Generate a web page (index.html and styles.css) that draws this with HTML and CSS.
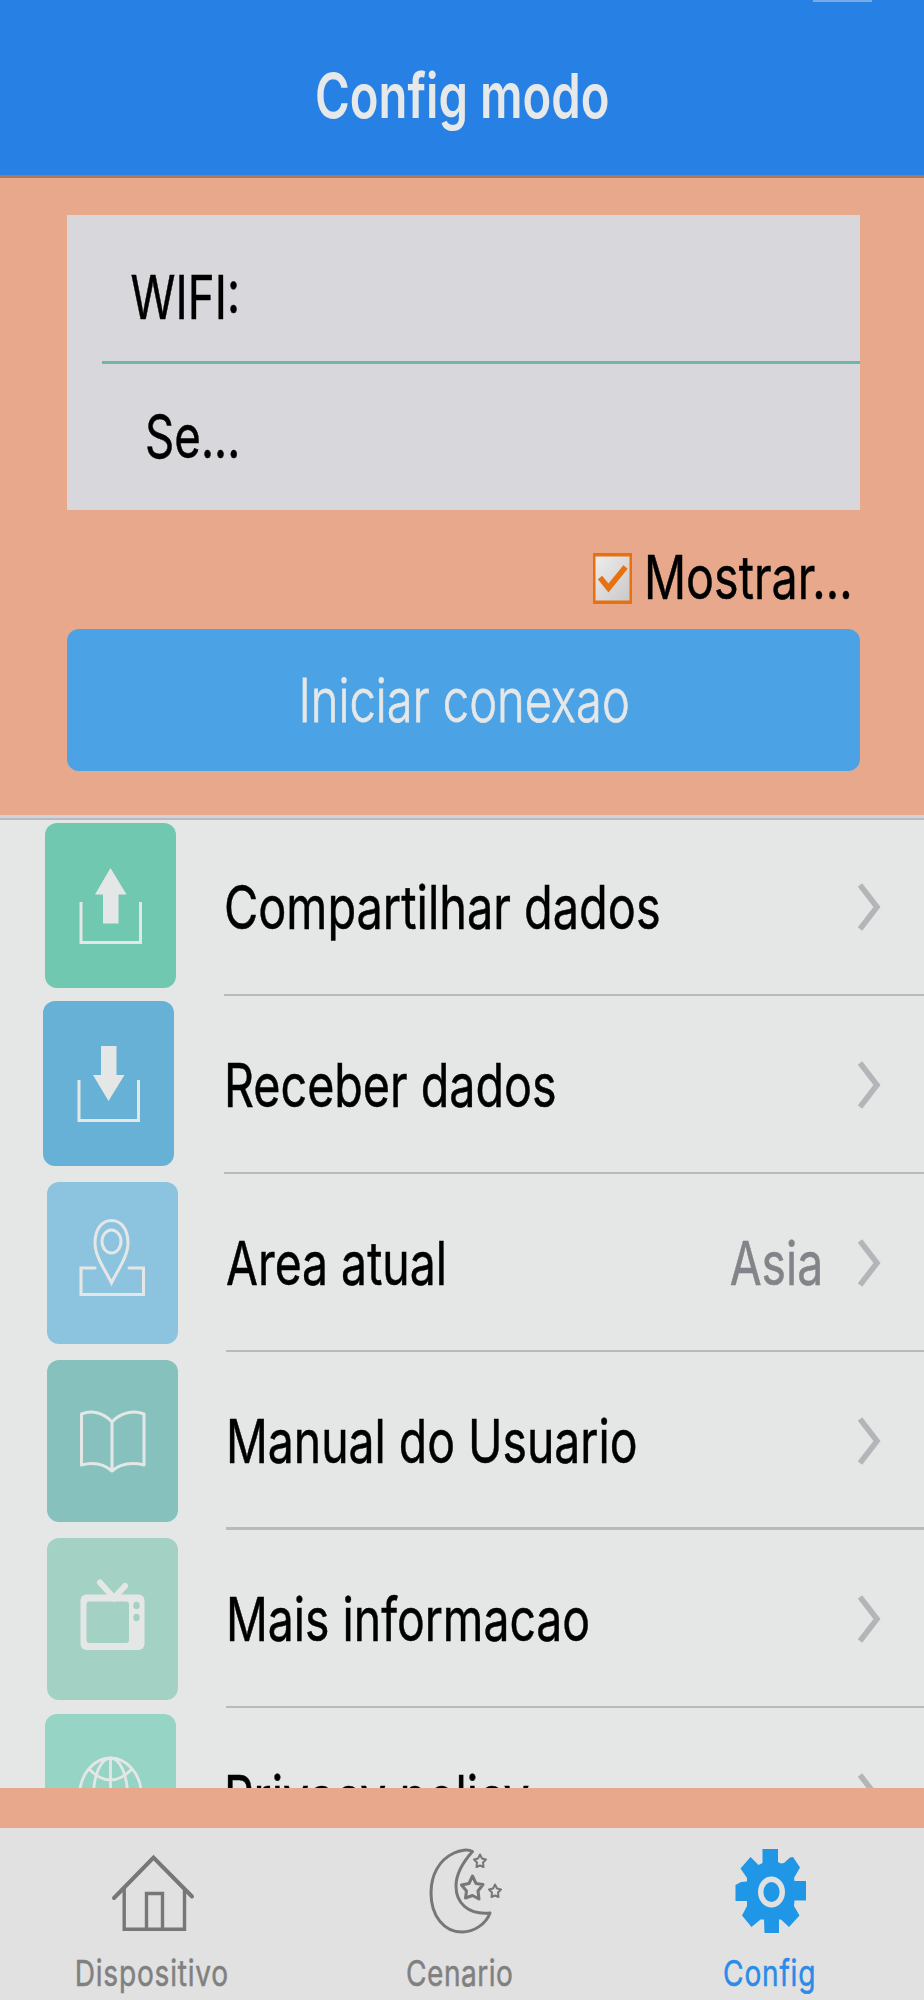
FILE: index.html
```
<!DOCTYPE html>
<html lang="pt">
    <head>
        <meta charset="UTF-8">
        <meta name="viewport" content="width=device-width, initial-scale=1.0">
        <title>Config modo</title>
        <link rel="stylesheet" href="styles.css">
    </head>
    <body>
        <header class="header">
            <div class="status-pill"></div>
            <h1 class="narrow">Config modo</h1>
        </header>

        <div class="wifi">
            <div class="wifi-card">
                <div class="field"><span class="narrow">WIFI:</span></div>
                <div class="line"></div>
                <div class="field"><span class="narrow">Se...</span></div>
            </div>
            <div class="show">
                <svg class="checkbox" width="39" height="51" viewBox="0 0 39 51">
                    <defs>
                        <linearGradient id="box" x1="0" y1="0" x2="1" y2="1">
                            <stop offset="0" stop-color="#ededed"/>
                            <stop offset="1" stop-color="#c9c9c9"/>
                        </linearGradient>
                    </defs>
                    <rect width="39" height="51" fill="#e8700f"/>
                    <rect x="2.5" y="3.5" width="34" height="44" fill="url(#box)"/>
                    <path d="M7 24.5L15.5 35L32.500 14" fill="none" stroke="#e8700f" stroke-width="5.6"/>
                </svg>
                <span class="narrow show-label">Mostrar...</span>
            </div>
            <button class="connect"><span class="narrow">Iniciar conexao</span></button>
        </div>

        <main class="list">
            <div class="row">
                <div class="tile share">
                    <svg width="131" height="165" viewBox="0 0 131 165">
                        <path d="M65.5 45L81.5 71.5H73.5V100.5H58V71.5H50Z" fill="#e5e7e6"/>
                        <path d="M36 79V119.5H95.5V79" fill="none" stroke="#e5e7e6" stroke-width="3"/>
                    </svg>
                </div>
                <div class="content">
                    <span class="narrow compartilhar">Compartilhar dados</span>
                    <svg class="chevron" width="23" height="48" viewBox="0 0 23 48"><path d="M2 2L19 24L2 46"/></svg>
                </div>
            </div>
            <div class="row">
                <div class="tile receive">
                    <svg width="131" height="165" viewBox="0 0 131 165">
                        <path d="M65.5 100L81.5 74H73.5V45H58V74H50Z" fill="#e5e7e6"/>
                        <path d="M36 79V119.5H95.5V79" fill="none" stroke="#e5e7e6" stroke-width="3"/>
                    </svg>
                </div>
                <div class="content">
                    <span class="narrow receber">Receber dados</span>
                    <svg class="chevron" width="23" height="48" viewBox="0 0 23 48"><path d="M2 2L19 24L2 46"/></svg>
                </div>
            </div>
            <div class="row inset">
                <div class="tile area">
                    <svg width="131" height="162" viewBox="0 0 131 162">
                        <g fill="none" stroke="#e5e7e6" stroke-width="3" stroke-linecap="round">
                            <path d="M64.5 101C59 89 48 75 48 61C48 47 55 38.5 64.5 38.5S81 47 81 61C81 75 70 89 64.5 101Z"/>
                            <ellipse cx="64.5" cy="59.5" rx="9.5" ry="11.5"/>
                            <path d="M48 86H34V112.5H96.5V86H82"/>
                        </g>
                    </svg>
                </div>
                <div class="content">
                    <span class="narrow">Area atual</span>
                    <span class="narrow value">Asia</span>
                    <svg class="chevron" width="23" height="48" viewBox="0 0 23 48"><path d="M2 2L19 24L2 46"/></svg>
                </div>
            </div>
            <div class="row inset thick">
                <div class="tile manual">
                    <svg width="131" height="162" viewBox="0 0 131 162">
                        <path d="M65 62C56 52 44 50 34.5 54V105C46 102 57 104 65 111C73 104 84 102 97 105V54C87 50 74 52 65 62ZM65 62V111" fill="none" stroke="#e5e7e6" stroke-width="3" stroke-linejoin="round"/>
                    </svg>
                </div>
                <div class="content">
                    <span class="narrow">Manual do Usuario</span>
                    <svg class="chevron" width="23" height="48" viewBox="0 0 23 48"><path d="M2 2L19 24L2 46"/></svg>
                </div>
            </div>
            <div class="row inset">
                <div class="tile more">
                    <svg width="131" height="162" viewBox="0 0 131 162">
                        <rect x="33.5" y="56.5" width="64" height="55.5" rx="6" fill="#e5e7e6"/>
                        <rect x="39.5" y="63.5" width="42.5" height="41.5" rx="3" fill="#a3d1c3"/>
                        <ellipse cx="89.5" cy="67.5" rx="3.2" ry="3.8" fill="#a3d1c3"/>
                        <ellipse cx="89.5" cy="79.5" rx="3.2" ry="3.8" fill="#a3d1c3"/>
                        <path d="M53 44.5L67 60L78 48" fill="none" stroke="#e5e7e6" stroke-width="6" stroke-linecap="round"/>
                    </svg>
                </div>
                <div class="content">
                    <span class="narrow">Mais informacao</span>
                    <svg class="chevron" width="23" height="48" viewBox="0 0 23 48"><path d="M2 2L19 24L2 46"/></svg>
                </div>
            </div>
            <div class="row">
                <div class="tile privacy">
                    <svg width="131" height="165" viewBox="0 0 131 165">
                        <g fill="none" stroke="#e5e7e6" stroke-width="2.8">
                            <ellipse cx="65.5" cy="82" rx="31" ry="38"/>
                            <ellipse cx="65.5" cy="82" rx="17" ry="38"/>
                            <path d="M65.5 44V120M34 82H97M44 55Q65.5 77 87 55M44 109Q65.5 87 87 109"/>
                        </g>
                    </svg>
                </div>
                <div class="content">
                    <span class="narrow">Privacy policy</span>
                    <svg class="chevron" width="23" height="48" viewBox="0 0 23 48"><path d="M2 2L19 24L2 46"/></svg>
                </div>
            </div>
        </main>

        <nav class="tabs">
            <div class="tab">
                <svg width="100" height="86" viewBox="0 0 100 86">
                    <g fill="none" stroke="#777" stroke-width="3.4">
                        <path d="M12 50L51.5 9.5L90 48.5" stroke-width="4" stroke-linecap="round"/>
                        <path d="M22.2 40V81.3H82.5V40M44.5 81V45.5H60.5V81"/>
                    </g>
                </svg>
                <span class="narrow">Dispositivo</span>
            </div>
            <div class="tab">
                <svg width="100" height="86" viewBox="0 0 100 86">
                    <g fill="none" stroke="#777" stroke-width="3" stroke-linejoin="round">
                        <path d="M62.5 3.5C58 1 50 2 44 5C29 12 21 27 21 45C21 68 34 84 52 84C64 84 76 76 80 65C58 67 46 55 46 38C46 24 54 13 62.5 3.5Z"/>
                        <path d="M62.5 28L66 35.5L73 36.5L68 43L69 51L62.5 47.5L55.5 50L56.5 43L51.5 37L59 35.5Z"/>
                        <path d="M70 6.5L72 10.5L76 11.5L73 14.5L73.5 19L70 17.5L66.5 19L67 14.5L64 11.5L68 10.5Z" stroke-width="2"/>
                        <path d="M85 36.5L87 40.5L91 41.5L88 44.5L88.5 49L85 47.5L81.5 49L82 44.5L79 41.5L83 40.5Z" stroke-width="2"/>
                    </g>
                </svg>
                <span class="narrow cenario">Cenario</span>
            </div>
            <div class="tab active">
                <svg width="100" height="86" viewBox="0 0 100 86">
                    <path d="M42.5 1H58V14L61 15.5L64 15L70 9.5L73 9L80 19.5L74 30L74.5 33H86V52.5H74.5L74 58L79.5 67.5L69 79L61 71.5H59V85H44.5L44 71.5H40.5L31.5 79L22 67.5L27 58V53H15.5V37L21 34L27 33.5V30L20.5 20.5L30.5 9L38.5 17L42.5 15Z" fill="#1f97e6"/>
                    <ellipse cx="51.5" cy="44" rx="10.8" ry="12.8" fill="none" stroke="#e1e1e1" stroke-width="5.4"/>
                </svg>
                <span class="narrow">Config</span>
            </div>
        </nav>
    </body>
</html>
```
FILE: styles.css
```
*{
    box-sizing: border-box;
}

body{
    margin: 0;
    height: 2000px;
    overflow: hidden;
    display: flex;
    flex-direction: column;
    background-color: #e7a88b;
    font-family: Inter, "Liberation Sans", sans-serif;
    font-size: 60px;
    line-height: 72px;
    color: #000;
}

/* tall, condensed lettering */
.narrow{
    display: inline-block;
    white-space: nowrap;
    transform: scaleX(0.772);
    transform-origin: left center;
    -webkit-text-stroke: 0.5px currentColor;
}

.header{
    height: 178px;
    flex: none;
    background-color: #2781e5;
    border-bottom: 3px solid #a9795f;
    text-align: center;
}

.status-pill{
    width: 59px;
    height: 2px;
    margin-left: 813px;
    background-color: #78abe5;
}

.header h1{
    margin: 57px 0 0;
    font-size: 62px;
    font-weight: 600;
    line-height: 74px;
    color: #e6e8e9;
    transform: scaleX(0.762);
    transform-origin: center;
    -webkit-text-stroke: 0;
}

.wifi{
    height: 637px;
    flex: none;
    padding: 37px 64px 0 67px;
}

.wifi-card{
    height: 295px;
    padding-top: 10px;
    background-color: #d8d8dc;
}

.field{
    height: 136px;
    width: 173px;
    padding-top: 36px;
    text-align: right;
}

.field .narrow{
    transform: scaleX(0.76);
    transform-origin: right center;
}

.line{
    height: 3px;
    margin-left: 35px;
    background-color: #70b5aa;
}

.show{
    height: 119px;
    padding: 43px 0 0 526px;
    display: flex;
    align-items: flex-start;
}

.checkbox{
    flex: none;
}

.show-label{
    margin: -12px 0 0 12px;
    transform: scaleX(0.777);
}

.connect{
    display: block;
    width: 793px;
    height: 142px;
    padding: 0 0 0 2px;
    border: none;
    border-radius: 12px;
    background-color: #4ba2e5;
    color: #e5e7e8;
    font: 300 60px/72px Inter, "Liberation Sans", sans-serif;
    text-align: center;
}

.connect .narrow{
    transform: scaleX(0.785);
    transform-origin: center;
    -webkit-text-stroke-width: 0.8px;
}

.list{
    height: 973px;
    flex: none;
    overflow: hidden;
    border-top: 3px solid #d2d2d8;
    background-color: #e5e7e6;
    box-shadow: inset 0 2px 0 #b9b9bf;
}

.row{
    height: 178px;
    display: flex;
}

.tile{
    width: 131px;
    height: 165px;
    margin: 5px 0 0 45px;
    border-radius: 12px;
    flex: none;
}

.tile svg{
    display: block;
}

.share{
    background-color: #71c8b0;
}

.receive{
    margin: 5px 2px 0 43px;
    background-color: #67b1d6;
}

.inset .tile{
    height: 162px;
    margin: 8px 0 0 47px;
}

.area{
    background-color: #8cc4df;
}

.manual{
    background-color: #87c1bd;
}

.more{
    background-color: #a3d1c3;
}

.privacy{
    margin-top: 6px;
    background-color: #96d4c5;
}

.content{
    flex: 1;
    min-width: 0;
    margin-left: 48px;
    padding: 1px 43px 0 0;
    display: flex;
    align-items: center;
    border-bottom: 2px solid #b9b9be;
}

.thick .content{
    padding-top: 2px;
    border-bottom-width: 3px;
}

.compartilhar{
    transform: scaleX(0.781);
}

.receber{
    transform: scaleX(0.777);
}

.chevron{
    margin-left: auto;
    flex: none;
}

.chevron path{
    fill: none;
    stroke: #b4b4b9;
    stroke-width: 5.6;
}

.value{
    margin-left: auto;
    color: #838389;
    transform-origin: right center;
}

.value + .chevron{
    margin-left: 35px;
}

.tabs{
    flex: 1;
    margin-top: 40px;
    display: grid;
    grid-template-columns: 303px 314px 306px;
    background-color: #e1e1e1;
}

.tab{
    padding-top: 20px;
    display: flex;
    flex-direction: column;
    align-items: center;
    color: #808080;
    font-size: 36px;
    line-height: 44px;
    letter-spacing: 1px;
}

.tab .narrow{
    margin-top: 17px;
    transform: scaleX(0.78);
    transform-origin: center;
}

.tab .cenario{
    letter-spacing: 0.6px;
}

.active{
    color: #2a8be8;
}
```
